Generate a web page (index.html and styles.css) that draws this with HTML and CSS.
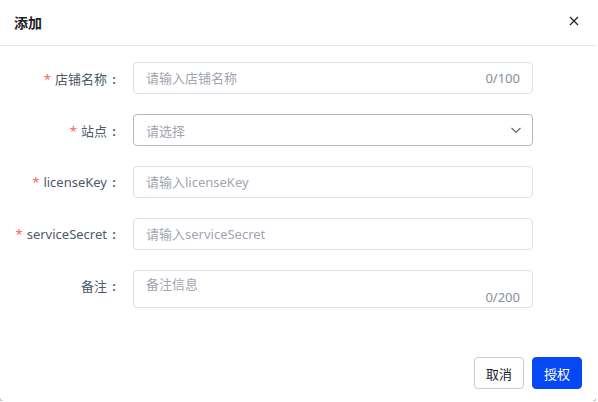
FILE: index.html
```html
<!DOCTYPE html>
<html lang="zh-CN">
<head>
  <meta charset="UTF-8">
  <meta name="viewport" content="width=device-width, initial-scale=1.0">
  <title>添加</title>
  <link rel="stylesheet" href="styles.css">
</head>
<body>
  <div class="dialog">
    <div class="dialog-header">
      <span class="dialog-title">添加</span>
      <button class="dialog-close" type="button" aria-label="关闭">
        <svg width="10" height="10" viewBox="0 0 10 10">
          <path d="M1 1L9 9M9 1L1 9" stroke="#1d2129" stroke-width="1.2" fill="none"/>
        </svg>
      </button>
    </div>

    <form class="dialog-body" action="#" method="post">
      <div class="form-row">
        <label class="form-label" for="shop-name"><span class="required">*</span>店铺名称<span class="colon">:</span></label>
        <div class="field">
          <input type="text" id="shop-name" placeholder="请输入店铺名称" maxlength="100">
          <span class="counter">0/100</span>
        </div>
      </div>

      <div class="form-row">
        <label class="form-label"><span class="required">*</span>站点<span class="colon">:</span></label>
        <div class="field field-select">
          <span class="select-placeholder">请选择</span>
          <svg width="12" height="8" viewBox="0 0 12 8">
            <path d="M1.5 2L6 6.2L10.5 2" stroke="#5c6370" stroke-width="1.1" fill="none"/>
          </svg>
        </div>
      </div>

      <div class="form-row">
        <label class="form-label" for="license-key"><span class="required">*</span>licenseKey<span class="colon">:</span></label>
        <div class="field">
          <input type="text" id="license-key" placeholder="请输入licenseKey">
        </div>
      </div>

      <div class="form-row">
        <label class="form-label" for="service-secret"><span class="required">*</span>serviceSecret<span class="colon">:</span></label>
        <div class="field">
          <input type="text" id="service-secret" placeholder="请输入serviceSecret">
        </div>
      </div>

      <div class="form-row">
        <label class="form-label" for="remark">备注<span class="colon">:</span></label>
        <div class="field field-area">
          <textarea id="remark" placeholder="备注信息" maxlength="200"></textarea>
          <span class="counter">0/200</span>
        </div>
      </div>
    </form>

    <div class="dialog-footer">
      <button type="button" class="btn">取消</button>
      <button type="button" class="btn btn-primary">授权</button>
    </div>
  </div>
</body>
</html>
```

FILE: styles.css
```css
* {
  box-sizing: border-box;
}
body {
  margin: 0;
  padding: 0;
  background-color: #fff;
  font-family: "Noto Sans", "Noto Sans CJK SC", sans-serif;
  font-size: 13px;
  color: #4e5969;
}
.dialog {
  width: 596px;
  height: 401px;
  background: #fff;
  border-radius: 0 0 4px 4px;
  box-shadow: 0 1px 0 #8a8a8a;
  display: flex;
  flex-direction: column;
}
.dialog-header {
  height: 46px;
  padding: 0 14px 0 14px;
  border-bottom: 1px solid #e5e6eb;
  display: flex;
  align-items: center;
  justify-content: space-between;
}
.dialog-title {
  font-size: 14px;
  font-weight: 600;
  color: #1d2129;
  margin-top: -2px;
}
.dialog-close {
  border: none;
  background: none;
  padding: 0;
  width: 16px;
  height: 16px;
  display: flex;
  align-items: center;
  justify-content: center;
  margin-top: -4px;
}
.dialog-body {
  padding-top: 16px;
  display: flex;
  flex-direction: column;
  gap: 20px;
}
.form-row {
  display: flex;
  align-items: center;
  gap: 12px;
}
.form-row:last-child {
  align-items: flex-start;
}
.form-row:last-child .form-label {
  line-height: 32px;
}
.form-label {
  width: 121px;
  text-align: right;
  color: #4e5969;
  white-space: nowrap;
}
.colon {
  display: inline-block;
  width: 14px;
  text-align: center;
  font-weight: 600;
}
.required {
  color: #f76560;
  margin-right: 4px;
}
.field {
  width: 400px;
  height: 32px;
  border: 1px solid #dcdfe6;
  border-radius: 4px;
  display: flex;
  align-items: center;
  padding: 0 12px;
  background: #fff;
}
.field input {
  flex: 1;
  min-width: 0;
  border: none;
  outline: none;
  padding: 0;
  font: inherit;
  color: #1d2129;
  background: transparent;
}
.field input::placeholder,
.field textarea::placeholder {
  color: #a1a6b0;
}
.counter {
  color: #86909c;
  font-size: 13px;
}
.field-select {
  border-color: #b4b8c0;
  justify-content: space-between;
  padding-right: 10px;
}
.select-placeholder {
  color: #a1a6b0;
}
.field-area {
  height: 38px;
  display: grid;
  padding: 0 12px;
}
.field-area textarea {
  grid-area: 1 / 1;
  border: none;
  outline: none;
  resize: none;
  padding: 3px 0 0;
  font: inherit;
  line-height: 20px;
  height: 36px;
  background: transparent;
}
.field-area .counter {
  grid-area: 1 / 1;
  align-self: end;
  justify-self: end;
  line-height: 16px;
  padding-bottom: 2px;
}
.dialog-footer {
  margin-top: auto;
  padding: 0 14px 12px;
  display: flex;
  justify-content: flex-end;
  gap: 8px;
}
.btn {
  width: 50px;
  height: 32px;
  padding: 0;
  border: 1px solid #c9cdd4;
  border-radius: 4px;
  background: #fff;
  color: #1d2129;
  font-family: inherit;
  font-size: 13px;
  cursor: pointer;
}
.btn-primary {
  background: #0648f4;
  border-color: #0648f4;
  color: #fff;
}
```
